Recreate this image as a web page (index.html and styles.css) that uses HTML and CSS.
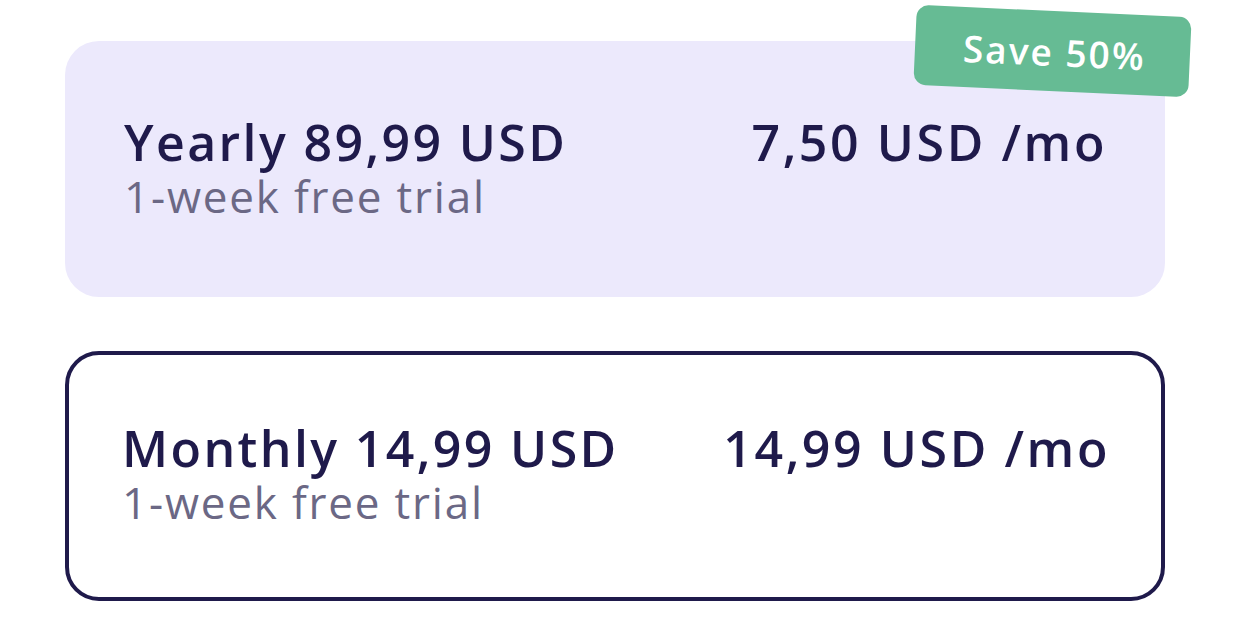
FILE: index.html
```html
<!DOCTYPE html>
<html>
<head>
<meta charset="utf-8">
<link rel="stylesheet" href="styles.css">
</head>
<body>
<div class="plans">
  <div class="card card-yearly">
    <div class="info">
      <div class="title">Yearly 89,99 USD</div>
      <div class="sub">1-week free trial</div>
    </div>
    <div class="price">7,50 USD /mo</div>
    <div class="badge">Save 50%</div>
  </div>
  <div class="card card-monthly">
    <div class="info">
      <div class="title">Monthly 14,99 USD</div>
      <div class="sub">1-week free trial</div>
    </div>
    <div class="price">14,99 USD /mo</div>
  </div>
</div>
</body>
</html>
```

FILE: styles.css
```css
html, body {
  margin: 0;
  padding: 0;
  background: #ffffff;
}
body {
  font-family: "Open Sans", "Liberation Sans", sans-serif;
  color: #1f1a4b;
}
.plans {
  display: flex;
  flex-direction: column;
  gap: 54px;
  padding: 41px 0 0 65px;
  width: 1100px;
}
.card {
  position: relative;
  box-sizing: border-box;
  display: flex;
  justify-content: space-between;
  align-items: flex-start;
  border-radius: 34px;
}
.card-yearly {
  height: 256px;
  background: #ece9fc;
  padding: 74px 58px 0 59px;
}
.card-monthly {
  height: 250px;
  border: 4px solid #1f1a4b;
  padding: 66px 51px 0 53px;
}
.title {
  font-size: 50px;
  font-weight: 600;
  line-height: 54px;
  letter-spacing: 2.4px;
}
.sub {
  font-size: 44px;
  font-weight: 500;
  line-height: 54px;
  letter-spacing: 1.8px;
  color: #6b6885;
}
.price {
  font-size: 50px;
  font-weight: 600;
  line-height: 54px;
  letter-spacing: 2.6px;
}
.badge {
  position: absolute;
  top: -30px;
  right: -25px;
  width: 275px;
  height: 80px;
  box-sizing: border-box;
  padding-left: 4px;
  background: #66bb94;
  color: #ffffff;
  border-radius: 12px;
  display: flex;
  align-items: center;
  justify-content: center;
  font-size: 37px;
  font-weight: 600;
  letter-spacing: 2px;
  transform: rotate(2.6deg);
}
```
